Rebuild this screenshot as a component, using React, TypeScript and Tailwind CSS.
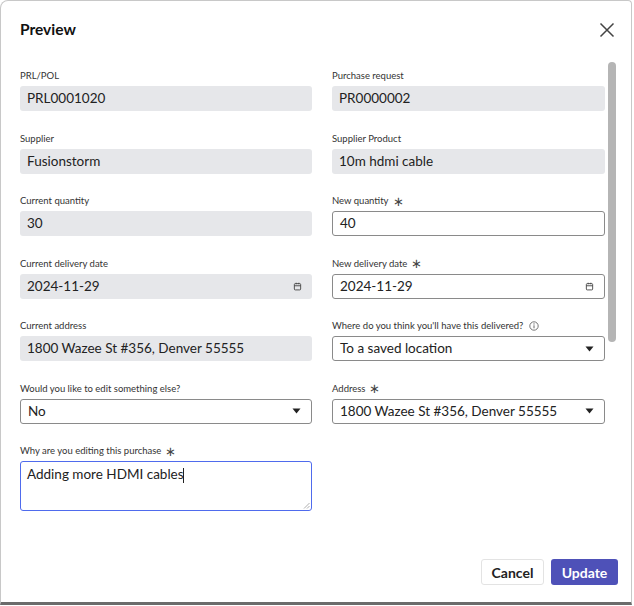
import React from "react";

const font = { fontFamily: "Lato, 'Open Sans', sans-serif" };

function Label({ text, req, info }: { text: string; req?: boolean; info?: boolean }) {
  return (
    <div className="h-[14px] mb-[3px] text-[9.5px] leading-[14px] text-[#333] flex items-center gap-1">
      <span>{text}</span>
      {req && <span className="text-[13px] leading-none text-[#444]">∗</span>}
      {info && (
        <svg width="10" height="10" viewBox="0 0 10 10" className="ml-[2px]">
          <circle cx="5" cy="5" r="4.2" fill="none" stroke="#555" strokeWidth="0.8" />
          <line x1="5" y1="4.3" x2="5" y2="7.3" stroke="#555" strokeWidth="0.9" />
          <circle cx="5" cy="2.9" r="0.55" fill="#555" />
        </svg>
      )}
    </div>
  );
}

const Cal = () => (
  <svg width="9" height="9" viewBox="0 0 10 10">
    <rect x="1.5" y="1.8" width="7" height="7" rx="1" fill="none" stroke="#444" strokeWidth="1" />
    <line x1="1.5" y1="4.2" x2="8.5" y2="4.2" stroke="#444" strokeWidth="1" />
    <line x1="3.5" y1="0.8" x2="3.5" y2="2.5" stroke="#444" strokeWidth="1" />
    <line x1="6.5" y1="0.8" x2="6.5" y2="2.5" stroke="#444" strokeWidth="1" />
  </svg>
);
const Caret = () => (
  <svg width="9" height="6" viewBox="0 0 9 6"><path d="M0.5 0.5h8L4.5 5.5z" fill="#222" /></svg>
);

function Field({ label, value, req, info, kind = "ro", icon }: { label: string; value: string; req?: boolean; info?: boolean; kind?: "ro" | "in"; icon?: "cal" | "caret" }) {
  const box =
    kind === "ro"
      ? "bg-[#e6e7ea] rounded-[3px]"
      : "bg-white border border-[#8a8a8a] rounded-[3px]";
  return (
    <div>
      <Label text={label} req={req} info={info} />
      <div className={`h-[25px] flex items-center justify-between pl-[7px] pr-[10px] text-[13.5px] text-[#222] ${box}`}>
        <span>{value}</span>
        {icon === "cal" && <Cal />}
        {icon === "caret" && <Caret />}
      </div>
    </div>
  );
}

export default function App() {
  return (
    <div style={font} className="w-[634px] h-[606px] bg-white overflow-hidden">
      <div className="relative w-[632px] h-[605px] border border-[#c8c8c8] border-b-[3px] border-b-[#6b6b6b] rounded-tl-[8px] rounded-tr-[4px] bg-white">
        <div className="flex items-center justify-between pl-[19px] pr-[16px] pt-[6px] h-[52px]">
          <h1 className="text-[15.5px] font-bold text-[#111]">Preview</h1>
          <svg width="16" height="16" viewBox="0 0 16 16">
            <path d="M1.5 1.5l13 13M14.5 1.5l-13 13" stroke="#444" strokeWidth="1.5" />
          </svg>
        </div>
        <div className="absolute right-[15px] top-[61px] w-[8px] h-[280px] rounded-full bg-[#b5b5b5]" />
        <div className="pl-[19px] pr-[26px] pt-[16px] grid grid-cols-[292px_273px] gap-x-[20px] gap-y-[20.5px]">
          <Field label="PRL/POL" value="PRL0001020" />
          <Field label="Purchase request" value="PR0000002" />
          <Field label="Supplier" value="Fusionstorm" />
          <Field label="Supplier Product" value="10m hdmi cable" />
          <Field label="Current quantity" value="30" />
          <Field label="New quantity" value="40" req kind="in" />
          <Field label="Current delivery date" value="2024-11-29" icon="cal" />
          <Field label="New delivery date" value="2024-11-29" req kind="in" icon="cal" />
          <Field label="Current address" value="1800 Wazee St #356, Denver 55555" />
          <Field label="Where do you think you'll have this delivered?" info value="To a saved location" kind="in" icon="caret" />
          <Field label="Would you like to edit something else?" value="No" kind="in" icon="caret" />
          <Field label="Address" req value="1800 Wazee St #356, Denver 55555" kind="in" icon="caret" />
          <div>
            <Label text="Why are you editing this purchase" req />
            <div className="relative h-[50px] border-[1.5px] border-[#4f6bed] rounded-[3px] px-[6px] pt-[2px] text-[13.5px] text-[#222]">
              Adding more HDMI cables<span className="inline-block w-px h-[15px] bg-[#222] align-middle -ml-[1px]" />
              <svg width="7" height="7" viewBox="0 0 7 7" className="absolute right-[1px] bottom-[1px]">
                <path d="M6.5 1L1 6.5M6.5 4L4 6.5" stroke="#999" strokeWidth="0.8" />
              </svg>
            </div>
          </div>
        </div>
        <div className="absolute right-[13px] bottom-[17px] flex gap-[7px]">
          <button className="h-[26px] w-[63px] rounded-[3px] border border-[#e3e3e3] bg-white text-[14px] font-bold text-[#222]">Cancel</button>
          <button className="h-[26px] w-[67px] rounded-[3px] bg-[#4e51b8] text-[14px] font-bold text-white">Update</button>
        </div>
      </div>
    </div>
  );
}
